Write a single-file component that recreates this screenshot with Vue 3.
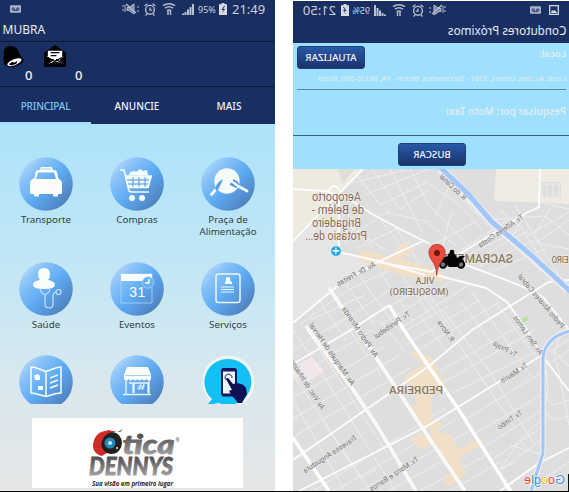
<script setup>
const tabs = ['PRINCIPAL', 'ANUNCIE', 'MAIS']
const tiles = [
  { icon: 'taxi', label: 'Transporte' },
  { icon: 'cart', label: 'Compras' },
  { icon: 'plate', label: 'Praça de Alimentação' },
  { icon: 'doctor', label: 'Saúde' },
  { icon: 'calendar', label: 'Eventos' },
  { icon: 'card', label: 'Serviços' },
  { icon: 'news', label: '' },
  { icon: 'shop', label: '' },
  { icon: 'touch', label: '' }
]

// Map geometry lives in one coordinate space shared by roads and labels.
const minor = [
  'M293 350L345 318M293 379L372 330M293 398L385 346M293 419L398 356M293 437L410 368M315 490L447 407M335 491L455 420M360 491L470 431M388 491L480 440M420 491L492 452M450 491L500 462',
  'M405 331L450 305M408 343L480 300M418 350L500 302M440 371L530 320M444 382L535 330M452 393L540 350M466 419L541 373M474 434L541 395M482 448L541 411M490 461L541 428',
  'M293 330L322 374L345 410L395 491M307 330L335 373L388 454M345 323L368 357M380 320L405 352M420 316L448 353M443 310L490 372L535 445M420 290L456 340L515 428M460 300L500 355M470 289L532 378M497 304L535 356',
  'M293 400L345 491M293 374L370 491M325 425L361 478L376 469M370 345L376 354L382 369M360 378L378 369L380 376',
  'M358 176L380 205L429 181M352 183L405 170M372 169L400 209L429 190M390 169L422 232M410 169L429 205M365 195L429 169M385 212L429 222M346 210L372 248M349 238L391 209M347 225L385 250M360 215L345 245M357 248L398 228M380 219L409 256M396 228L420 265M352 202L340 222L356 242',
  'M429 184L460 205L481 229M429 205L469 246M429 224L456 246M438 172L488 226M450 184L435 217M452 211L441 252M432 246L475 222M458 252L511 218M465 256L520 230M471 262L528 231M479 266L535 240M490 272L545 249',
  'M491 220L545 216L569 235M500 210L520 226L548 269M514 204L540 244L569 249M569 212L527 236M569 220L535 244M550 208L534 236L559 275M525 215L511 238M545 204L569 209M542 184H559V197H542ZM547 184V197M553 184V197',
  'M300 324L348 290L405 263M310 320L365 295M329 330L390 290M349 330L425 286M380 325L455 279M398 330L470 284M320 302L346 340M346 284L375 325M360 277L395 325M379 270L412 320M398 270L433 319M416 276L453 330',
  'M545 358L548 388L543 412L555 420L569 416M549 352L569 340M552 362L569 350M553 350L560 378L569 425M542 390L552 405L569 400M510 445L540 454M520 440L528 450M500 469L520 440L541 420M500 469L516 462M541 440L500 470M530 488L569 462M561 330L555 353L569 366'
]
const medium = [
  'M293 189L326 191L348 198L372 214L400 229L430 244M363 169L293 241M339 198V252L378 261L425 275',
  'M433 272L378 262L340 284L293 323M425 240L378 262',
  'M293 364L351 330L389 305M293 460L429 366L472 330L539 288L549 282L569 280M299 491L429 425L542 355',
  'M500 491L539 463L569 448M540 169L539 207L528 212L479 242L429 273',
  'M436 275L455 280L486 288L507 302L527 330L542 355L569 391M466 265L519 285L543 297L569 330'
]
const arterials = [
  'M389 305L404 330L429 367L459 410L507 486L511 491',
  'M329 288L357 330L379 362L427 435L465 491',
  'M306 326L352 388L376 424L416 491',
  'M293 438L329 491'
]
const streets = [
  ['R. do Canal', 453, 187, 44, 34],
  ['Tv. Alferes Costa', 501, 231, -34, 53],
  ['Av. Dr. Freitas', 356, 274, -28, 43],
  ['Pedro Álvares Cabral', 541, 301, 50, 68],
  ['Tv. Perebebuí', 392, 325, -34, 42],
  ['R. Nova', 446, 331, 55, 24],
  ['Av. Sen. Lemos', 528, 335, 55, 46],
  ['Tv. Pirajá', 505, 349, 28, 26],
  ['Tv. Mauriti', 514, 373, -33, 31],
  ['Tv. Timbó', 510, 420, -34, 28],
  ['Av. Pedro Miranda', 360, 332, 56, 59],
  ['Av. Marquês de Herval', 332, 354, 55, 74],
  ['Av. Visc. de Inhaúma', 307, 384, 57, 59],
  ['Travessa Angustura', 330, 454, -33, 63],
  ['Tv. Mariz e Barros', 394, 474, -33, 57]
]
const places = [
  ['SACRAMENTA', 474, 263, 78, 12],
  ['VILA', 425, 284, 19, 9],
  ['(MOSQUEIRO)', 419, 295, 59, 9],
  ['PEDREIRA', 416, 394, 54, 11.5],
  ['EIRO', 560, 263, 17, 9.5]
]
</script>

<template>
  <svg class="defs" aria-hidden="true">
    <defs>
      <linearGradient id="ball" x1="0.1" y1="0.1" x2="0.9" y2="0.9">
        <stop offset="0" stop-color="#b2dafb" />
        <stop offset="0.2" stop-color="#8ac2f8" />
        <stop offset="0.53" stop-color="#5dabf3" />
        <stop offset="0.8" stop-color="#5590d2" />
        <stop offset="1" stop-color="#4b7fb4" />
      </linearGradient>
      <symbol id="signals" viewBox="0 0 74 16">
        <g fill="none" stroke="#b4bbcd" stroke-width="1">
          <path d="M1 4v2M1 8v2M3 4v7M16 5v2M16 9v2" />
          <path d="M5 6.500h2l5-3.500v10l-5-3.500H5z" fill="#7e89a6" />
          <path d="M4 3l10 9" stroke-width="1.500" />
          <circle cx="28" cy="8.800" r="4.400" stroke-width="1.400" />
          <path d="M28 6.500v2.700h2.300M22.500 5l3-2.300M33.500 5l-3-2.300M25 13l-1.500 1.500M31 13l1.500 1.500" stroke-width="1.300" />
          <path d="M41 4.700q6-4 12 0M43 7.200q4-3 8 0M45 9.700q2-1.500 4 0" stroke-width="1.600" />
          <path d="M46 10v4M48.500 9v5" stroke-width="1.500" />
        </g>
        <path d="M60 14v-1.500h2V14zM62.500 14v-3h2v3zM65 14V8.500h2V14zM67.500 14V6h2v8zM70 14V3h2v11z" fill="#bac1d1" />
      </symbol>
      <symbol id="battery" viewBox="0 0 8 12">
        <path d="M2.500 0h3v1.300H8V12H0V1.300h2.500z" fill="#d6d9e2" />
        <path d="M5 3L2.500 7h2L3 10.500 6 6H4.200L6 3z" fill="#182c60" />
      </symbol>
      <symbol id="voicemail" viewBox="0 0 12 8">
        <rect width="12" height="8" rx="1" fill="#a9b3c9" />
        <g fill="none" stroke="#1b2f62"><circle cx="3.500" cy="4" r="1.300" /><circle cx="8.500" cy="4" r="1.300" /><path d="M3.500 5.500h5" /></g>
      </symbol>
    </defs>
  </svg>

  <main class="board">
    <section class="phone home">
      <div class="status">
        <svg class="vm"><use href="#voicemail" /></svg>
        <svg class="signals"><use href="#signals" /></svg>
        <span class="pct">95%</span>
        <svg class="battery"><use href="#battery" /></svg>
        <span class="clock">21:49</span>
      </div>
      <h1 class="title">MUBRA</h1>
      <div class="counters">
        <svg class="bell" viewBox="0 0 22 24">
          <path d="M1.500 20Q0 16 1 9Q0 2 7 1Q14 0 17 8Q18 12 21.500 15Q21 20 12 23Q6 24 1.500 20Z" fill="#020204" />
          <ellipse cx="12" cy="18" rx="8" ry="3" transform="rotate(-22 12 18)" fill="#fff" />
          <path d="M6 20l4-2.500 2 1 3-2-1 3-5 2z" fill="#020204" />
        </svg>
        <b>0</b>
        <svg class="mail" viewBox="0 0 24 24">
          <path d="M0 8L11.500 0 23 8V21Q23 23 21 23H2Q0 23 0 21Z" fill="#020204" />
          <path d="M4 6h15v7l3-2-6 5 5 4-9-3-9 3 5-4-6-5 2 1z" fill="#fff" />
          <path d="M7 8h9M7 11h6M4 13l7 4 8-4M3 20l7-5M20 20l-7-5" stroke="#020204" stroke-width="1.300" fill="none" />
        </svg>
        <b>0</b>
      </div>
      <nav class="tabs">
        <span v-for="(t, i) in tabs" :key="t" :class="{ active: i === 0 }">{{ t }}</span>
      </nav>

      <div class="content">
        <div class="tiles">
          <div v-for="t in tiles" :key="t.icon" class="tile">
            <svg class="ball" viewBox="0 0 54 54">
              <circle v-if="t.icon !== 'touch'" cx="27" cy="27" r="26.800" fill="url(#ball)" />
              <g v-if="t.icon === 'taxi'" fill="#fbfdfa">
                <rect x="21.500" y="10" width="12" height="4" rx="1" />
                <path fill-rule="evenodd" d="M19 13h17q2 0 3 7l1 2q3 1 3 5v9q0 1-2 1H13q-2 0-2-1v-9q0-4 3-5l2-2q0-7 3-7zM19 15.500l-2 6.500h20l-2-6.500z" />
                <rect x="15" y="36" width="5" height="3.500" rx="1" /><rect x="34" y="36" width="5" height="3.500" rx="1" />
                <path d="M23 12h9" stroke="#a5cdf0" />
              </g>
              <g v-else-if="t.icon === 'cart'" fill="none" stroke="#f6fbfd" stroke-width="1.600">
                <path d="M10 13h4l5 21q1 1 3 1h17" /><path d="M16 19h25l-3 11H18z" fill="#e9f4fb" />
                <path d="M17 23h23M18 27h21M23 19v11M29 19v11M35 19v11" stroke="#5399df" stroke-width="1" />
                <path d="M16 19.500h25l-3 11H19" /><path d="M19 18l1-3 5-1 1 1 4-3 3 2 4-1 1 5z" fill="#f6fbfd" stroke="none" />
                <circle cx="22" cy="41" r="3" fill="#f6fbfd" stroke="none" /><circle cx="32" cy="41" r="3" fill="#f6fbfd" stroke="none" />
              </g>
              <g v-else-if="t.icon === 'plate'">
                <circle cx="26" cy="24" r="12.700" fill="#f5fafb" />
                <path d="M10.500 37.500L16 31" stroke="#f5fafb" stroke-width="2.800" stroke-linecap="round" />
                <path d="M14 32Q16 24 22 22.500L18 31l-2 3z" fill="#5a9fe0" />
                <path d="M30 26l5 4 3-2-3-4M32 23l5 3M29 27l6 3" stroke="#4a91d5" stroke-width="1.500" fill="none" />
                <path d="M37 29l9 5" stroke="#f5fafb" stroke-width="2.800" stroke-linecap="round" />
              </g>
              <g v-else-if="t.icon === 'doctor'">
                <path d="M25 6q6 0 6 6 0 4-2 6 7 1 7 5 0 4-11 4t-11-4q0-4 7-5-2-2-2-6 0-6 6-6z" fill="#fafdfd" />
                <path d="M21 27l1 3 4 3 4-3 1-3M26 33v9q0 4 4 4t4-4v-8q1-4 3-4" fill="none" stroke="#c5e0f8" stroke-width="1.200" />
                <circle cx="39.500" cy="30" r="2.500" fill="none" stroke="#c5e0f8" stroke-width="1.200" />
              </g>
              <g v-else-if="t.icon === 'calendar'">
                <path d="M11 12h31v29H11z" fill="none" stroke="#a7cff3" stroke-width="0.900" />
                <path d="M11 12h31v7H11z" fill="#fbfdfd" />
                <circle cx="38" cy="20.500" r="5.700" fill="#66aef2" stroke="#a9d0f6" stroke-width="0.900" />
                <path d="M39 17v4h-4" fill="none" stroke="#fff" stroke-width="1.400" />
                <text x="27.300" y="35" text-anchor="middle" textLength="16" class="day">31</text>
              </g>
              <g v-else-if="t.icon === 'card'" fill="none" stroke="#ecf6fd">
                <rect x="15" y="12" width="24" height="28.500" rx="2.500" stroke-width="1.500" />
                <path d="M20 25h13M20 27.500h13M20 30h13" stroke-width="1.200" />
                <path d="M25 19q-1-4 2-4t2 4l2 1v2h-7v-2z" fill="#f8fcff" stroke="none" />
              </g>
              <g v-else-if="t.icon === 'news'" fill="none" stroke="#f8fcff" stroke-width="1.500" stroke-linejoin="round">
                <path d="M12 12l4 .500 11 4 11-4 4-.500v26l-5 .500-10 3-11-3-4-.500zM27 16.500v25" />
                <path d="M31 23l8-3M31 28l8-3M31 33l8-3" />
                <path d="M15 20h1l3-1 2 2v4h-5zM19 31h5v4h-5z" fill="#f8fcff" stroke="none" />
              </g>
              <g v-else-if="t.icon === 'shop'">
                <path d="M17 12h21l3 8v4q-2 3-4.500 0-2 3-4.500 0-2 3-4.500 0-2 3-4.500 0-2 3-4.500 0-2 3-4.500 0v-4z" fill="#f8fcfb" />
                <path d="M15 20.500h25" stroke="#9ac5ee" stroke-width="0.800" />
                <path d="M16 25v13.500M39 25v13.500M13 39.500h28M24 38V28h14v10M19 28h4v10" fill="none" stroke="#e9f4fa" stroke-width="1.300" />
                <path d="M29 35l2-6M32 35l2-6M28 31h7M27 33h7" stroke="#e9f4fa" />
              </g>
              <g v-else>
                <path d="M27 .500a26 26 0 0 1 0 53Q20 53 17 51L1 53 9 45A26 26 0 0 1 27 .500z" fill="#eff5f0" />
                <path d="M27 4a23 23 0 1 1-9 44L6 50l5-6A23 23 0 0 1 27 4z" fill="#13bff4" />
                <rect x="21" y="14" width="14" height="26" rx="2" fill="#eaf8fc" stroke="#15175f" stroke-width="2" />
                <path d="M21 15h14M21 40h14" stroke="#15175f" stroke-width="3" />
                <path d="M25 25a3.500 3.500 0 1 1 6-2" fill="none" stroke="#24266b" />
                <path d="M25 24q1-2 3 0l4 5 4-1q7 1 9 5l1 6-5 9h-4L29 38q-2-3 2-3z" fill="#101057" />
              </g>
            </svg>
            <span v-if="t.label" class="label">{{ t.label }}</span>
          </div>
        </div>

        <div class="ad">
          <svg viewBox="32 418 211 70">
            <defs>
              <linearGradient id="metal" x1="0" y1="0" x2="0" y2="1">
                <stop offset="0.2" stop-color="#4a4a4a" /><stop offset="0.9" stop-color="#a8a8a8" />
              </linearGradient>
            </defs>
            <path d="M115 431.500Q97 428 93.500 442 91 453 102 456L110 451Q103 447 103 441 104 434 115 431.500z" fill="#cf2c29" />
            <ellipse cx="111.500" cy="443" rx="10.500" ry="11" fill="#22211f" />
            <path d="M117 432Q105 431 102 441 100 447 103 452L98 452 97 436 108 430z" fill="#cf2c29" />
            <circle cx="110" cy="443" r="5.500" fill="#2585bd" /><circle cx="110" cy="443" r="2" fill="#d6eef8" />
            <circle cx="117" cy="448" r="1" fill="#eee" />
            <path d="M118 432l5-3-3 3z" fill="#333" />
            <text x="122.500" y="453.500" textLength="52" lengthAdjust="spacingAndGlyphs" class="brand upper">tica</text>
            <text x="89" y="475" textLength="84" lengthAdjust="spacingAndGlyphs" class="brand lower">DENNYS</text>
            <text x="175.500" y="442" class="reg">®</text>
            <text x="92" y="486" textLength="81" lengthAdjust="spacingAndGlyphs" class="slogan">Sua visão em primeiro lugar</text>
          </svg>
        </div>
      </div>
    </section>

    <section class="phone drivers">
      <div class="flip">
        <div class="status">
          <svg class="pic" viewBox="0 0 10 10"><path d="M.700.700h8.600v8.600H.700z" fill="none" stroke="#d5dae6" stroke-width="1.300" /><path d="M2 8l2-3 1.500 1L7 5l1 3z" fill="#d5dae6" /></svg>
          <svg class="vm"><use href="#voicemail" /></svg>
          <svg class="signals"><use href="#signals" /></svg>
          <span class="pct">95%</span>
          <svg class="battery"><use href="#battery" /></svg>
          <span class="clock">21:50</span>
        </div>
        <h1 class="title">Condutores Próximos</h1>
        <div class="where">
          <div class="row"><span class="key">Local:</span><button class="btn">ATUALIZAR</button></div>
          <p class="address">Local: Av. Sen. Lemos, 3761 - Sacramenta, Belém - PA, 66120-000, Brazil</p>
        </div>
        <div class="what">Pesquisar por: Moto Taxi</div>
        <div class="go"><button class="btn">BUSCAR</button></div>
      </div>
      <svg class="map" viewBox="293 169 276 322">
        <rect x="293" y="169" width="276" height="322" fill="#dedede" />
        <path d="M293 169h70l-70 72z" fill="#eeeae0" />
        <path d="M337 169h18l-12 14z" fill="#e0ded9" />
        <path d="M339 198L293 241v82l47-39 38-22-39-10z" fill="#e6e6e6" />
        <path d="M496 169h73v35l-75-3z" fill="#efebe2" />
        <path d="M541 182h20v16h-20z" fill="#dedede" />
        <path d="M293 367l19-10 12 14-18 12-13-8z" fill="#f3e5ec" />
        <path d="M521 319l6-3 2 5-6 4z" fill="#bfe0a0" />
        <g fill="none" stroke="#efefef" stroke-width="0.900"><path v-for="(d, i) in minor" :key="i" :d="d" /></g>
        <g fill="#f1dfc7">
          <path d="M359 251l14 2 17 3 14-14 11 7-14 9 42 14v10l-28-4-14-3-42-14z" />
          <path d="M410 353l9-6 4 9 9 1 12 26-13 16 2 25-12 10 10 10-9 6-12-11 14-8-17-24 11-4-14-26 19-13z" />
          <path d="M429 427l10-8 3 7-7 5 15 4 10 15 19-12 6 5-26 14 7 17-17 13-6-7 9-8-18-28-12 3-4-8 13-5z" />
        </g>
        <g fill="none" stroke="#fcfcfc" stroke-width="1.900"><path v-for="(d, i) in medium" :key="i" :d="d" /></g>
        <circle cx="334" cy="191" r="5" fill="none" stroke="#fff" stroke-width="1.300" />
        <g fill="none" stroke="#fff" stroke-width="3.400"><path v-for="(d, i) in arterials" :key="i" :d="d" /></g>
        <path :d="arterials[1] + arterials[2]" fill="none" stroke="#e4e4e4" stroke-width="0.600" />
        <g fill="none" stroke="#a0c6fa">
          <path d="M441 168L492 222 569 290" stroke="#ededed" stroke-width="8.500" />
          <path d="M440 167L468 194 492 222 531 255 571 292" stroke-width="5" />
          <path d="M569 331Q546 337 543 357V453L531 491" stroke="#eee" stroke-width="5.500" />
          <path d="M570 331Q546 337 543 357V453L531 491" stroke-width="3" />
        </g>

        <g class="street">
          <text v-for="s in streets" :key="s[0]" :transform="`translate(${s[1]} ${s[2]}) rotate(${s[3]}) scale(-1 1)`" y="2.500" text-anchor="middle" :textLength="s[4]" lengthAdjust="spacingAndGlyphs">{{ s[0] }}</text>
        </g>
        <g class="place">
          <text v-for="p in places" :key="p[0]" :transform="`translate(${p[1]} ${p[2]}) scale(-1 1)`" text-anchor="middle" :textLength="p[3]" lengthAdjust="spacingAndGlyphs" :font-size="p[4]">{{ p[0] }}</text>
        </g>
        <g class="airport">
          <text transform="translate(361 201) scale(-1 1)" textLength="49" lengthAdjust="spacingAndGlyphs">Aeroporto</text>
          <text transform="translate(364 214) scale(-1 1)" textLength="52" lengthAdjust="spacingAndGlyphs">de Belém -</text>
          <text transform="translate(361 227) scale(-1 1)" textLength="49" lengthAdjust="spacingAndGlyphs">Brigadeiro</text>
          <text transform="translate(367 240) scale(-1 1)" textLength="62" lengthAdjust="spacingAndGlyphs">Protásio de...</text>
        </g>
        <circle cx="336" cy="251" r="5.300" fill="#1ea5e3" stroke="#e9f7fd" stroke-width="0.700" />
        <path d="M332.500 250.300l2.800-.300v-2.600h1.200v2.600l2.900.300v1.200l-2.900.200v2.500h-1.200v-2.500l-2.800-.2z" fill="#fff" />

        <g fill="#777" stroke="#050505" stroke-width="2"><circle cx="443" cy="264.500" r="3.200" /><circle cx="461" cy="264.500" r="3.200" /></g>
        <path d="M439 261q2-4 6-4l3-1q0-3 3-4l4 2 2 4 3-2 5 0-3 3 2 2q-3 0-5 3l-2 3h-8l-4-4-3-2z" fill="#050505" />
        <circle cx="452" cy="252" r="2.300" fill="#050505" />
        <path d="M436.700 275.500Q436.500 266 431.500 260 428 255 429 250.500 431 244.300 437 244.300 443 244.300 445 250.500 446 255 442.500 260 437.500 266 436.700 275.500z" fill="#ea4b3f" stroke="#aa3830" stroke-width="0.700" />
        <circle cx="437" cy="253" r="3" fill="#6c1815" />
        <text class="google" transform="translate(565 484) scale(-1 1)" textLength="41" lengthAdjust="spacingAndGlyphs"><tspan fill="#4285f4">G</tspan><tspan fill="#ea4335">o</tspan><tspan fill="#fbbc05">o</tspan><tspan fill="#4285f4">g</tspan><tspan fill="#34a853">l</tspan><tspan fill="#ea4335">e</tspan></text>
        <path d="M568.500 474v17" stroke="#111" />
      </svg>
    </section>
  </main>
</template>

<style>
body { background: #fff; overflow: hidden; }
</style>

<style scoped>
.defs { position: absolute; width: 0; height: 0; }
.board { display: flex; justify-content: space-between; box-sizing: border-box; width: 569px; height: 492px; border-bottom: 1px solid #050505; background: #fff; font-family: "Noto Sans", sans-serif; }
.phone { display: flex; flex-direction: column; height: 491px; overflow: hidden; }
.home { width: 275px; background: #1a2f61; box-sizing: border-box; border-bottom: 1px solid #eee; }
.drivers { width: 276px; }
.flip { transform: scaleX(-1); background: #9ee0fe; height: 168px; border-top: 1px solid #fff; }
.status { display: flex; align-items: center; height: 18px; padding-left: 10px; background: #1a2f61; color: #ccd1dd; }
.vm { width: 11px; height: 8px; }
.pic { width: 10px; height: 10px; margin-right: 8px; }
.signals { width: 74px; height: 16px; margin-left: auto; margin-right: 2px; }
.pct { width: 20px; margin-right: 1px; font-size: 9px; }
.battery { width: 8px; height: 12px; }
.clock { width: 48px; padding-left: 5px; box-sizing: border-box; font-size: 13px; }
.title { margin: 0; height: 23px; line-height: 24px; padding-left: 2.5px; font-size: 12px; font-weight: 400; color: #e8eaf0; background: #1a2f61; }
.counters { display: flex; align-items: flex-start; height: 46px; padding: 3px 3px 0; border-top: 1px solid #0b1838; border-bottom: 1px solid #0b1838; box-sizing: border-box; color: #f0f1f5; }
.bell { width: 21px; height: 23px; }
.mail { width: 23px; height: 23px; margin-left: 12px; }
.counters b { font-size: 13px; font-weight: 500; line-height: 18px; margin: 20.5px 0 0 1px; }
.mail + b { margin-left: 7.5px; }
.tabs { display: grid; grid-template-columns: 91px 91px 93px; height: 37px; text-align: center; font-size: 10px; font-weight: 500; color: #f0f2f6; line-height: 38px; }
.tabs span { box-sizing: border-box; height: 37px; padding-left: 1px; }
.tabs .active { padding: 0; color: #7cc3ec; letter-spacing: -.15px; border-bottom: 2px solid #a3dcf9; }
.content { flex: 1; background: linear-gradient(#ade3fa, #c0e6f6 36%, #d7e8ef 68%, #e6e6e6); }
.tiles { display: grid; grid-template-columns: repeat(3, 91px); grid-template-rows: 105px 93px 49.5px; padding: 33px 0 0 .5px; height: 247px; overflow: hidden; }
.tile { display: flex; flex-direction: column; align-items: center; overflow: hidden; }
.ball { width: 54px; height: 54px; flex: none; }
.label { width: 62px; margin-top: 3px; text-align: center; font-size: 9.8px; line-height: 12px; color: #333e45; }
.day { font: 14px "Liberation Sans", sans-serif; fill: #fff; }
.ad { width: 211px; height: 70px; margin: 14px 0 0 32px; background: #fff; }
.ad svg { display: block; width: 211px; height: 70px; }
.brand { font-family: Lato, sans-serif; font-weight: 900; font-style: italic; fill: url(#metal); stroke: url(#metal); stroke-width: .8px; }
.upper { font-size: 26px; }
.lower { font-size: 25px; }
.reg { font-size: 5px; fill: #555; }
.slogan { font: italic 700 7px "Open Sans", sans-serif; fill: #282828; }
.drivers .title { height: 24px; line-height: 22px; font-size: 11.7px; }
.where { height: 46px; margin: 0 4px 0 3px; border-bottom: 1px solid #60869c; }
.row { display: flex; justify-content: space-between; padding: 3px 0 0; height: 25px; }
.key { font-size: 9.6px; font-weight: 600; line-height: 15px; color: #e3eef0; }
.btn { display: block; width: 68px; height: 23px; padding: 0; border: 1px solid #1b4380; border-radius: 3px; background: linear-gradient(#285aa7, #1b326c); color: #f4f5f9; font: 500 9.7px/21px "Noto Sans", sans-serif; text-align: center; }
.where .btn { margin-left: auto; margin-right: -2px; }
.address { margin: 0; white-space: nowrap; font-size: 7.46px; line-height: 14px; color: #e6eeee; }
.what { height: 45px; padding-left: 3px; border-bottom: 1px solid #34627f; font-size: 10px; font-weight: 600; line-height: 43px; color: #e0ecee; }
.where .btn { margin-right: 0; }
.go { display: flex; padding: 7px 0 0 103px; }
.map { display: block; width: 276px; height: 322px; }
.street { font: 7.5px Roboto, sans-serif; fill: #747474; stroke: #e8e8e8; stroke-width: 1.2px; paint-order: stroke; }
.place { font-family: Roboto, sans-serif; font-weight: 500; fill: #8c7b60; stroke: #eee; stroke-width: 1px; paint-order: stroke; }
.airport { font: 12px Roboto, sans-serif; fill: #8d6a57; stroke: #f3f1ec; stroke-width: 1px; paint-order: stroke; }
.google { font: 500 13.5px "Liberation Sans", sans-serif; stroke: #fff; stroke-width: 1px; paint-order: stroke; }
</style>
